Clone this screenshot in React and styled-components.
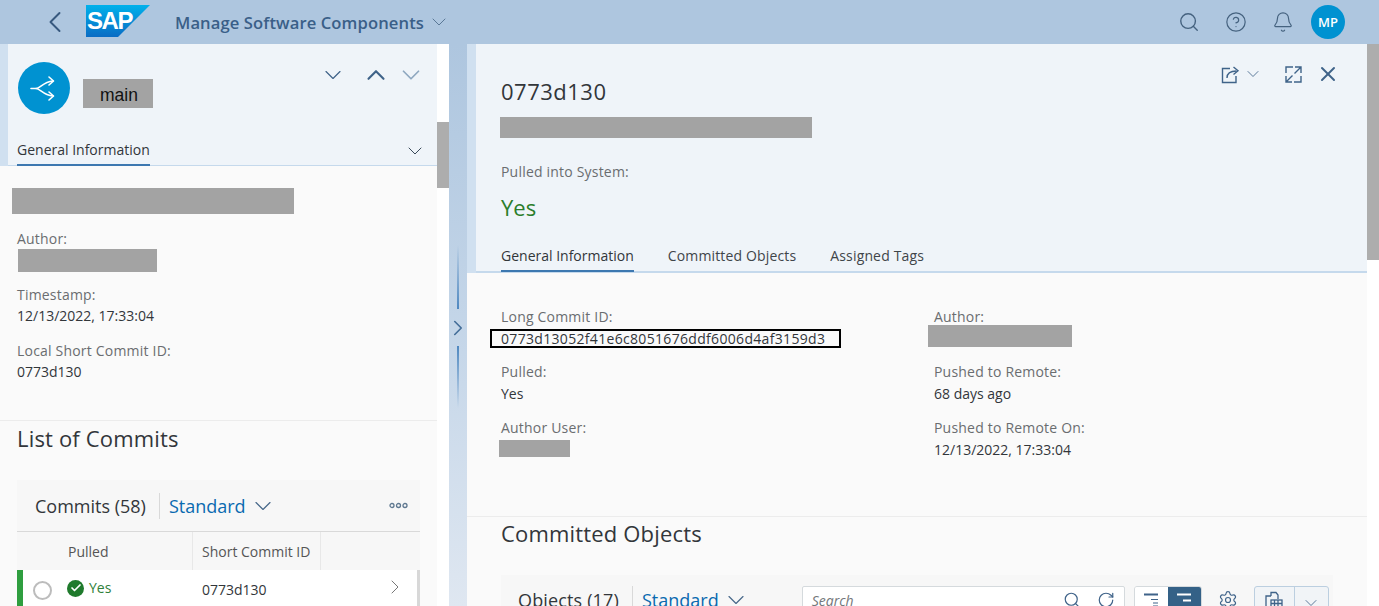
import React from 'react';
import styled, { createGlobalStyle } from 'styled-components';
import { Search, CircleHelp, Bell, X, ChevronDown, ChevronUp, ChevronLeft, ChevronRight, RotateCw, Settings, Check } from 'lucide-react';

const GlobalStyle = createGlobalStyle`
  html, body { margin: 0; padding: 0; height: 100%; overflow: hidden; }
  body { font-family: "Open Sans", "Noto Sans", sans-serif; color: #32363a; background: #fff; }
  * { box-sizing: border-box; }
`;

const Page = styled.div`
  width: 1379px;
  height: 606px;
  overflow: hidden;
  display: flex;
  flex-direction: column;
`;

/* ---- shell bar ---- */
const ShellBar = styled.header`
  height: 44px;
  flex: none;
  background: #aec6df;
  display: flex;
  align-items: center;
  color: #38597f;
`;
const BackBtn = styled.div`
  display: flex;
  margin-left: 37px;
  width: 49px;
`;
const LogoBox = styled.svg`
  display: block;
  margin-top: -2px;
`;
const ShellTitle = styled.div`
  margin-left: 25px;
  font-size: 16.6px;
  font-weight: 600;
  letter-spacing: 0.1px;
  color: #3a5f88;
`;
const TitleChevron = styled.div`
  display: flex;
  margin-left: 3px;
  color: #5a7896;
`;
const ShellActions = styled.div`
  margin-left: auto;
  margin-right: 34px;
  display: flex;
  align-items: center;
  gap: 25px;
  color: #45627f;
`;
const Avatar = styled.div`
  width: 34px;
  height: 34px;
  border-radius: 50%;
  background: #0092d1;
  color: #fff;
  font-size: 13px;
  font-weight: 600;
  display: flex;
  align-items: center;
  justify-content: center;
  margin-left: -8px;
`;

/* ---- columns ---- */
const Columns = styled.div`
  flex: 1;
  display: flex;
  min-height: 0;
`;
const LeftPane = styled.section`
  width: 437px;
  flex: none;
  background: #fafafa;
  overflow: hidden;
`;
const Scroll = styled.div`
  width: 12px;
  flex: none;
  background: #fff;
`;
const Thumb = styled.div`
  height: ${p => p.$h}px;
  margin-top: ${p => p.$top}px;
  background: #adadad;
`;
const Splitter = styled.div`
  width: 18px;
  flex: none;
  background: linear-gradient(#aec6df, #c6d7e9 55%, #dfe7f1);
  position: relative;
  color: #426d98;
`;
const SplitLine = styled.div`
  position: absolute;
  left: 8px;
  width: 2px;
  top: ${p => p.$top}px;
  height: ${p => p.$h}px;
  background: linear-gradient(${p => p.$dir}, rgba(70, 130, 190, 0), #4f88c0);
`;
const SplitArrow = styled.div`
  position: absolute;
  left: -4px;
  top: 271px;
  display: flex;
`;
const RightPane = styled.section`
  flex: 1;
  min-width: 0;
  background: #fafafa;
  overflow: hidden;
`;

/* ---- left header ---- */
const LeftHeader = styled.div`
  height: 122px;
  margin-left: 8px;
  background: #eff4f9;
  position: relative;
  padding: 18px 0 0 10px;
  box-shadow: -8px 0 0 #d0e0f0;
  border-bottom: 1px solid #c5d9ec;
`;
const TitleRow = styled.div`
  display: flex;
  align-items: flex-start;
`;
const Round = styled.div`
  width: 52px;
  height: 52px;
  border-radius: 50%;
  background: #0092d1;
  display: flex;
  align-items: center;
  justify-content: center;
`;
const Redact = styled.div`
  background: #a3a3a3;
  width: ${p => p.$w}px;
  height: ${p => p.$h}px;
  margin-left: ${p => p.$x || 0}px;
`;
const MainLabel = styled(Redact)`
  color: #111;
  font-family: "Liberation Sans", sans-serif;
  font-size: 17.5px;
  display: flex;
  align-items: center;
  justify-content: center;
  margin-top: 17px;
  margin-left: 13px;
  padding: 4px 0 0 2px;
`;
const HeaderNav = styled.div`
  margin-left: auto;
  display: flex;
  align-items: center;
  color: #3f6389;
  margin-right: 11px;
  margin-top: -2px;
`;
const NavGap = styled.div`
  width: ${p => p.$w}px;
`;
const TabRow = styled.div`
  display: flex;
  align-items: flex-end;
  position: absolute;
  left: ${p => p.$left}px;
  right: 10px;
  bottom: 0;
  gap: 34px;
`;
const Tab = styled.div`
  font-size: 14px;
  line-height: 20px;
  padding-bottom: 4px;
  margin-bottom: -1px;
  letter-spacing: ${p => (p.$active ? '0' : '0.15px')};
  color: ${p => (p.$active ? '#32363a' : '#3f4549')};
  border-bottom: 2px solid ${p => (p.$active ? '#3d78b0' : 'transparent')};
`;
const TabChevron = styled.div`
  display: flex;
  margin-left: auto;
  margin-bottom: 2px;
  color: #3a4a5a;
`;

/* ---- form bits ---- */
const LeftBody = styled.div`
  padding: 22px 0 0 12px;
  height: 255px;
  border-bottom: 1px solid #ececec;
`;
const FieldList = styled.div`
  padding: 15px 0 0 5px;
  display: flex;
  flex-direction: column;
  gap: 15px;
`;
const Field = styled.div`
  display: flex;
  flex-direction: column;
  gap: ${p => (p.$tight ? 1 : 2)}px;
`;
const Label = styled.div`
  font-size: 14px;
  line-height: 20px;
  letter-spacing: 0.2px;
  color: #6a6d70;
`;
const Value = styled.div`
  font-size: 14px;
  line-height: 20px;
  color: #32363a;
`;
const SectionTitle = styled.h2`
  margin: 0;
  font-size: 22px;
  font-weight: 400;
  line-height: 30px;
  letter-spacing: 0.17px;
  color: #32363a;
`;

/* ---- commits card ---- */
const ListSection = styled.div`
  padding: 2px 17px 0;
`;
const Card = styled.div`
  margin-top: 27px;
  width: 403px;
  background: #f7f7f7;
`;
const CardBar = styled.div`
  height: 52px;
  display: flex;
  align-items: center;
  padding: 0 12px 0 18px;
  border-bottom: 1px solid #d9d9d9;
`;
const CardTitle = styled.div`
  font-size: 18px;
  color: #32363a;
`;
const BarDivider = styled.div`
  width: 1px;
  height: 26px;
  background: #d9d9d9;
  margin: 0 9px 0 13px;
`;
const Variant = styled.div`
  font-size: 18px;
  color: #0a6ab0;
`;
const VariantChevron = styled.div`
  display: flex;
  margin-left: 3px;
  color: #47688a;
`;
const Dots = styled.svg`
  margin-left: auto;
  display: block;
`;
const HeadRow = styled.div`
  height: 38px;
  display: grid;
  grid-template-columns: 176px 128px 1fr;
  font-size: 14px;
  color: #555;
  background: #f7f7f7;
`;
const HeadCell = styled.div`
  display: flex;
  align-items: center;
  padding-left: ${p => p.$pad}px;
  border-right: 1px solid #e8e8e8;
  &:last-child { border-right: 0; }
`;
const DataRow = styled.div`
  height: 40px;
  display: grid;
  grid-template-columns: 179px 1fr 34px;
  background: #fff;
  border-left: 6px solid #2f9e3f;
  border-right: 3px solid #d8d8d8;
  align-items: center;
`;
const PulledCell = styled.div`
  display: flex;
  align-items: center;
  padding-left: 10px;
`;
const Radio = styled.div`
  width: 19px;
  height: 19px;
  border: 2px solid #bcbcbc;
  border-radius: 50%;
  background: #fff;
`;
const OkIcon = styled.div`
  width: 17px;
  height: 17px;
  margin-left: 15px;
  margin-top: -4px;
  border-radius: 50%;
  background: #1f7a2c;
  color: #fff;
  display: flex;
  align-items: center;
  justify-content: center;
`;
const YesText = styled.div`
  font-size: 14px;
  color: #2f7f3a;
  margin-left: 5px;
  margin-top: -5px;
`;
const RowChevron = styled.div`
  display: flex;
  color: #777;
  margin-top: -6px;
`;

/* ---- right panel ---- */
const RightHeader = styled.div`
  height: 229px;
  margin-left: 9px;
  background: #eff4f9;
  box-shadow: -9px 0 0 #d0e0f0;
  border-bottom: 2px solid #c5d9ec;
  position: relative;
  padding: 32px 0 0 25px;
`;
const HeaderTitle = styled.h1`
  margin: 0 0 11px;
  font-size: 22px;
  font-weight: 400;
  line-height: 30px;
  letter-spacing: 0.5px;
`;
const StatusValue = styled.div`
  font-size: 22px;
  line-height: 30px;
  color: #2b7d2b;
  margin-top: 10px;
`;
const HeaderBlock = styled.div`
  margin-top: 24px;
`;
const RightActions = styled.div`
  position: absolute;
  top: 18px;
  right: 27px;
  display: flex;
  align-items: center;
  color: #3f6389;
`;
const RightBody = styled.div`
  height: 244px;
  border-bottom: 1px solid #ececec;
  padding: 34px 0 0 34px;
  display: grid;
  grid-template-columns: 433px 1fr;
  align-content: start;
`;
const FormCol = styled.div`
  display: flex;
  flex-direction: column;
  gap: 14px;
`;
const RedactIn = styled(Redact)`
  margin-top: ${p => p.$mt || 0}px;
  margin-bottom: ${p => p.$mb || 0}px;
`;
const BoxedValue = styled.div`
  width: 351px;
  height: 19px;
  margin-left: -11px;
  border: 2px solid #000;
  padding-left: 9px;
  font-size: 14px;
  line-height: 15px;
  letter-spacing: 0.32px;
  white-space: nowrap;
  color: #32363a;
`;
const ObjectsSection = styled.div`
  padding: 1px 0 0 34px;
`;
const ObjectsCard = styled.div`
  margin-top: 27px;
  width: 832px;
  height: 40px;
  background: #f7f7f7;
  display: flex;
  padding: 11px 0 0 17px;
`;
const ObjTitle = styled(CardTitle)`
  line-height: 26px;
  margin-top: 1px;
  letter-spacing: 0.15px;
`;
const ObjVariant = styled(Variant)`
  line-height: 26px;
  margin-top: 1px;
`;
const SearchBox = styled.div`
  width: 323px;
  height: 34px;
  margin-left: 52px;
  background: #fff;
  border: 1px solid #d5dadd;
  border-radius: 2px;
  display: flex;
  align-items: flex-start;
  padding: 4px 9px 0;
  font-size: 14px;
  font-style: italic;
  color: #74777a;
`;
const SearchIcons = styled.div`
  margin-left: auto;
  display: flex;
  gap: 16px;
  color: #3f6389;
`;
const Segmented = styled.div`
  display: flex;
  margin-left: 9px;
  height: 34px;
  border: 1px solid #d5dadd;
  border-radius: 3px;
  overflow: hidden;
`;
const SegBtn = styled.div`
  width: 33px;
  background: ${p => (p.$on ? '#346187' : '#fff')};
  color: ${p => (p.$on ? '#fff' : '#3f6389')};
  display: flex;
  justify-content: center;
  padding-top: 5px;
`;
const GearBox = styled.div`
  width: 52px;
  display: flex;
  justify-content: center;
  padding-top: 4px;
  color: #3f6389;
`;
const SplitBtn = styled.div`
  display: flex;
  height: 34px;
  border: 1px solid #bccfe0;
  border-radius: 3px;
  background: #f1f4f7;
  color: #3f6389;
`;
const SplitPart = styled.div`
  width: ${p => p.$w}px;
  display: flex;
  justify-content: center;
  padding-top: ${p => p.$top}px;
  border-left: ${p => (p.$sep ? '1px solid #bccfe0' : '0')};
`;

const SapLogo = () => (
  <LogoBox width="64" height="32" viewBox="0 0 64 32">
    <defs>
      <linearGradient id="sapfill" x1="0" y1="0" x2="0" y2="1">
        <stop offset="0" stopColor="#00b1eb" />
        <stop offset="1" stopColor="#0a6cc4" />
      </linearGradient>
    </defs>
    <polygon points="0,0 64,0 32,32 0,32" fill="url(#sapfill)" />
    <text x="1" y="24" fontFamily="Liberation Sans" fontWeight="700" fontSize="24" letterSpacing="-1.4" fill="#fff">SAP</text>
  </LogoBox>
);

const BranchIcon = () => (
  <svg width="30" height="30" viewBox="0 0 30 30" fill="none" stroke="#fff" strokeWidth="1.6" strokeLinecap="round" strokeLinejoin="round">
    <path d="M2 15.5 H7 C11 15.5 14 9 24 8" />
    <path d="M7 15.5 C11 15.5 14 22 24 23" />
    <path d="M20 4 L24.5 8 L20 12" />
    <path d="M20 19 L24.5 23 L20 27" />
  </svg>
);

const ShareIcon = () => (
  <svg width="19" height="19" viewBox="0 0 19 19" fill="none" stroke="currentColor" strokeWidth="1.4">
    <path d="M9 3.5 H1.5 V17.5 H15 V11" />
    <path d="M6 13 C6 8 9 6 15.5 6" />
    <path d="M12.5 2 L17 5.8 L12.5 9.5" />
  </svg>
);

const ExpandIcon = () => (
  <svg width="19" height="19" viewBox="0 0 19 19" fill="none" stroke="currentColor" strokeWidth="1.4">
    <path d="M2 8 V2 H9" />
    <path d="M17 11 V17 H10" />
    <path d="M11 2 H17 V8 M17 2 L10.5 8.5" />
    <path d="M2 11 V17 H8 M2 17 L8.5 10.5" />
  </svg>
);

const ListIconA = () => (
  <svg width="18" height="20" viewBox="0 0 18 20" fill="none" stroke="currentColor">
    <path d="M2 2.5 H16" strokeWidth="2" />
    <path d="M9 7.5 H16 M11 11 H16 M11 14 H16 M11 17 H16" strokeWidth="1.2" />
  </svg>
);

const ListIconB = () => (
  <svg width="18" height="20" viewBox="0 0 18 20" fill="none" stroke="currentColor">
    <path d="M2 2.5 H16" strokeWidth="2" />
    <path d="M8 8.5 H16" strokeWidth="2" />
  </svg>
);

const TableIcon = () => (
  <svg width="20" height="22" viewBox="0 0 20 22" fill="none" stroke="currentColor" strokeWidth="1.3">
    <path d="M7 5 V1.5 H12 L14 4 V8" />
    <path d="M7 5 H2 V19 H6" />
    <rect x="7" y="9" width="11" height="10" />
    <path d="M7 12.5 H18 M7 16 H18 M10.5 9 V19 M14 9 V19" />
  </svg>
);

const App = () => (
  <Page>
    <GlobalStyle />
    <ShellBar>
      <BackBtn><ChevronLeft size={36} strokeWidth={1.3} /></BackBtn>
      <SapLogo />
      <ShellTitle>Manage Software Components</ShellTitle>
      <TitleChevron><ChevronDown size={24} strokeWidth={1} /></TitleChevron>
      <ShellActions>
        <Search size={22} strokeWidth={1.5} />
        <CircleHelp size={22} strokeWidth={1.3} />
        <Bell size={22} strokeWidth={1.3} />
        <Avatar>MP</Avatar>
      </ShellActions>
    </ShellBar>

    <Columns>
      <LeftPane>
        <LeftHeader>
          <TitleRow>
            <Round><BranchIcon /></Round>
            <MainLabel $w={70} $h={29}>main</MainLabel>
            <HeaderNav>
              <ChevronDown size={28} strokeWidth={1} />
              <NavGap $w={14} />
              <ChevronUp size={30} strokeWidth={1.7} />
              <NavGap $w={5} />
              <ChevronDown size={30} strokeWidth={1.4} color="#8fa8c0" />
            </HeaderNav>
          </TitleRow>
          <TabRow $left={9}>
            <Tab $active>General Information</Tab>
            <TabChevron><ChevronDown size={24} strokeWidth={1} /></TabChevron>
          </TabRow>
        </LeftHeader>
        <LeftBody>
          <Redact $w={282} $h={26} />
          <FieldList>
            <Field $tight>
              <Label>Author:</Label>
              <RedactIn $w={139} $h={23} $x={1} $mt={-1} $mb={-2} />
            </Field>
            <Field $tight>
              <Label>Timestamp:</Label>
              <Value>12/13/2022, 17:33:04</Value>
            </Field>
            <Field $tight>
              <Label>Local Short Commit ID:</Label>
              <Value>0773d130</Value>
            </Field>
          </FieldList>
        </LeftBody>
        <ListSection>
          <SectionTitle>List of Commits</SectionTitle>
          <Card>
            <CardBar>
              <CardTitle>Commits (58)</CardTitle>
              <BarDivider />
              <Variant>Standard</Variant>
              <VariantChevron><ChevronDown size={28} strokeWidth={1} /></VariantChevron>
              <Dots width="19" height="7" viewBox="0 0 19 7" fill="none" stroke="#5f7890" strokeWidth="1.3">
                <circle cx="3" cy="3.5" r="2" />
                <circle cx="9.5" cy="3.5" r="2" />
                <circle cx="16" cy="3.5" r="2" />
              </Dots>
            </CardBar>
            <HeadRow>
              <HeadCell $pad={51}>Pulled</HeadCell>
              <HeadCell $pad={9}>Short Commit ID</HeadCell>
              <HeadCell $pad={0} />
            </HeadRow>
            <DataRow>
              <PulledCell>
                <Radio />
                <OkIcon><Check size={12} strokeWidth={3.4} /></OkIcon>
                <YesText>Yes</YesText>
              </PulledCell>
              <Value>0773d130</Value>
              <RowChevron><ChevronRight size={24} strokeWidth={1} /></RowChevron>
            </DataRow>
          </Card>
        </ListSection>
      </LeftPane>
      <Scroll><Thumb $top={78} $h={66} /></Scroll>

      <Splitter>
        <SplitLine $top={201} $h={64} $dir="to bottom" />
        <SplitLine $top={302} $h={62} $dir="to top" />
        <SplitArrow><ChevronRight size={26} strokeWidth={1.5} /></SplitArrow>
      </Splitter>

      <RightPane>
        <RightHeader>
          <HeaderTitle>0773d130</HeaderTitle>
          <Redact $w={312} $h={21} $x={-1} />
          <HeaderBlock>
            <Label>Pulled into System:</Label>
            <StatusValue>Yes</StatusValue>
          </HeaderBlock>
          <TabRow $left={25}>
            <Tab $active>General Information</Tab>
            <Tab>Committed Objects</Tab>
            <Tab>Assigned Tags</Tab>
          </TabRow>
          <RightActions>
            <ShareIcon />
            <NavGap $w={3} />
            <ChevronDown size={20} strokeWidth={1} />
            <NavGap $w={21} />
            <ExpandIcon />
            <NavGap $w={13} />
            <X size={24} strokeWidth={2} />
          </RightActions>
        </RightHeader>
        <RightBody>
          <FormCol>
            <Field>
              <Label>Long Commit ID:</Label>
              <BoxedValue>0773d13052f41e6c8051676ddf6006d4af3159d3</BoxedValue>
            </Field>
            <Field>
              <Label>Pulled:</Label>
              <Value>Yes</Value>
            </Field>
            <Field>
              <Label>Author User:</Label>
              <RedactIn $w={71} $h={17} $x={-2} />
            </Field>
          </FormCol>
          <FormCol>
            <Field>
              <Label>Author:</Label>
              <RedactIn $w={144} $h={22} $x={-6} $mt={-4} $mb={1} />
            </Field>
            <Field>
              <Label>Pushed to Remote:</Label>
              <Value>68 days ago</Value>
            </Field>
            <Field>
              <Label>Pushed to Remote On:</Label>
              <Value>12/13/2022, 17:33:04</Value>
            </Field>
          </FormCol>
        </RightBody>
        <ObjectsSection>
          <SectionTitle>Committed Objects</SectionTitle>
          <ObjectsCard>
            <ObjTitle>Objects (17)</ObjTitle>
            <BarDivider />
            <ObjVariant>Standard</ObjVariant>
            <VariantChevron><ChevronDown size={28} strokeWidth={1} /></VariantChevron>
            <SearchBox>
              Search
              <SearchIcons>
                <Search size={18} strokeWidth={1.6} />
                <RotateCw size={18} strokeWidth={1.6} />
              </SearchIcons>
            </SearchBox>
            <Segmented>
              <SegBtn><ListIconA /></SegBtn>
              <SegBtn $on><ListIconB /></SegBtn>
            </Segmented>
            <GearBox><Settings size={20} strokeWidth={1.4} /></GearBox>
            <SplitBtn>
              <SplitPart $w={39} $top={4}><TableIcon /></SplitPart>
              <SplitPart $w={34} $top={6} $sep><ChevronDown size={20} strokeWidth={1} /></SplitPart>
            </SplitBtn>
          </ObjectsCard>
        </ObjectsSection>
      </RightPane>
      <Scroll><Thumb $top={0} $h={216} /></Scroll>
    </Columns>
  </Page>
);

export default App;
